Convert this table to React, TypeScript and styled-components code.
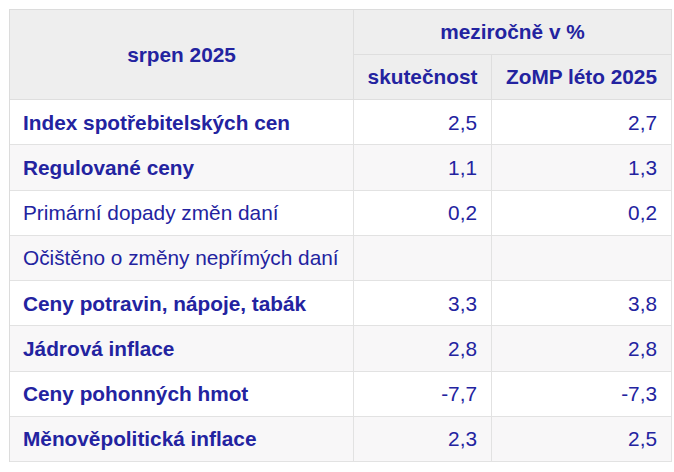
import React from "react";
import styled, { createGlobalStyle } from "styled-components";

const Global = createGlobalStyle`
  html, body { margin: 0; padding: 0; background: #ffffff; }
  body { font-family: "Liberation Sans", Arial, sans-serif; }
`;

const Wrap = styled.div`
  padding: 9px 0 0 9px;
`;

const Table = styled.table`
  border-collapse: separate;
  border-spacing: 0;
  width: 662px;
  table-layout: fixed;
  font-size: 20.8px;
  color: #2323a0;
  border-top: 1px solid #dcdcdc;
  border-left: 1px solid #dcdcdc;
`;

const Th = styled.th<{ $align?: string }>`
  background: #eeeeee;
  font-weight: 700;
  text-align: ${(p) => p.$align || "center"};
  padding: 10px 13px;
  line-height: 24px;
  border-right: 1px solid #dedede;
  border-bottom: 1px solid #dedede;
  white-space: nowrap;
`;

const Row = styled.tr<{ $alt?: boolean }>`
  background: ${(p) => (p.$alt ? "#f8f7f8" : "#ffffff")};
`;

const Td = styled.td<{ $bold?: boolean; $num?: boolean }>`
  font-weight: ${(p) => (p.$bold ? 700 : 400)};
  text-align: ${(p) => (p.$num ? "right" : "left")};
  padding: 10.5px ${(p) => (p.$num ? "14px" : "13px")} 10.5px 13px;
  line-height: 23.25px;
  border-right: 1px solid #e2e2e2;
  border-bottom: 1px solid #e2e2e2;
  white-space: nowrap;
`;

const rows: { label: string; bold: boolean; a: string; b: string }[] = [
  { label: "Index spotřebitelských cen", bold: true, a: "2,5", b: "2,7" },
  { label: "Regulované ceny", bold: true, a: "1,1", b: "1,3" },
  { label: "Primární dopady změn daní", bold: false, a: "0,2", b: "0,2" },
  { label: "Očištěno o změny nepřímých daní", bold: false, a: "", b: "" },
  { label: "Ceny potravin, nápoje, tabák", bold: true, a: "3,3", b: "3,8" },
  { label: "Jádrová inflace", bold: true, a: "2,8", b: "2,8" },
  { label: "Ceny pohonných hmot", bold: true, a: "-7,7", b: "-7,3" },
  { label: "Měnověpolitická inflace", bold: true, a: "2,3", b: "2,5" },
];

export default function App() {
  return (
    <>
      <Global />
      <Wrap>
        <Table>
          <colgroup>
            <col style={{ width: 344 }} />
            <col style={{ width: 138 }} />
            <col style={{ width: 180 }} />
          </colgroup>
          <thead>
            <tr>
              <Th rowSpan={2}>srpen 2025</Th>
              <Th colSpan={2}>meziročně v %</Th>
            </tr>
            <tr>
              <Th>skutečnost</Th>
              <Th>ZoMP léto 2025</Th>
            </tr>
          </thead>
          <tbody>
            {rows.map((r, i) => (
              <Row key={r.label} $alt={i % 2 === 1}>
                <Td $bold={r.bold}>{r.label}</Td>
                <Td $num>{r.a}</Td>
                <Td $num>{r.b}</Td>
              </Row>
            ))}
          </tbody>
        </Table>
      </Wrap>
    </>
  );
}
